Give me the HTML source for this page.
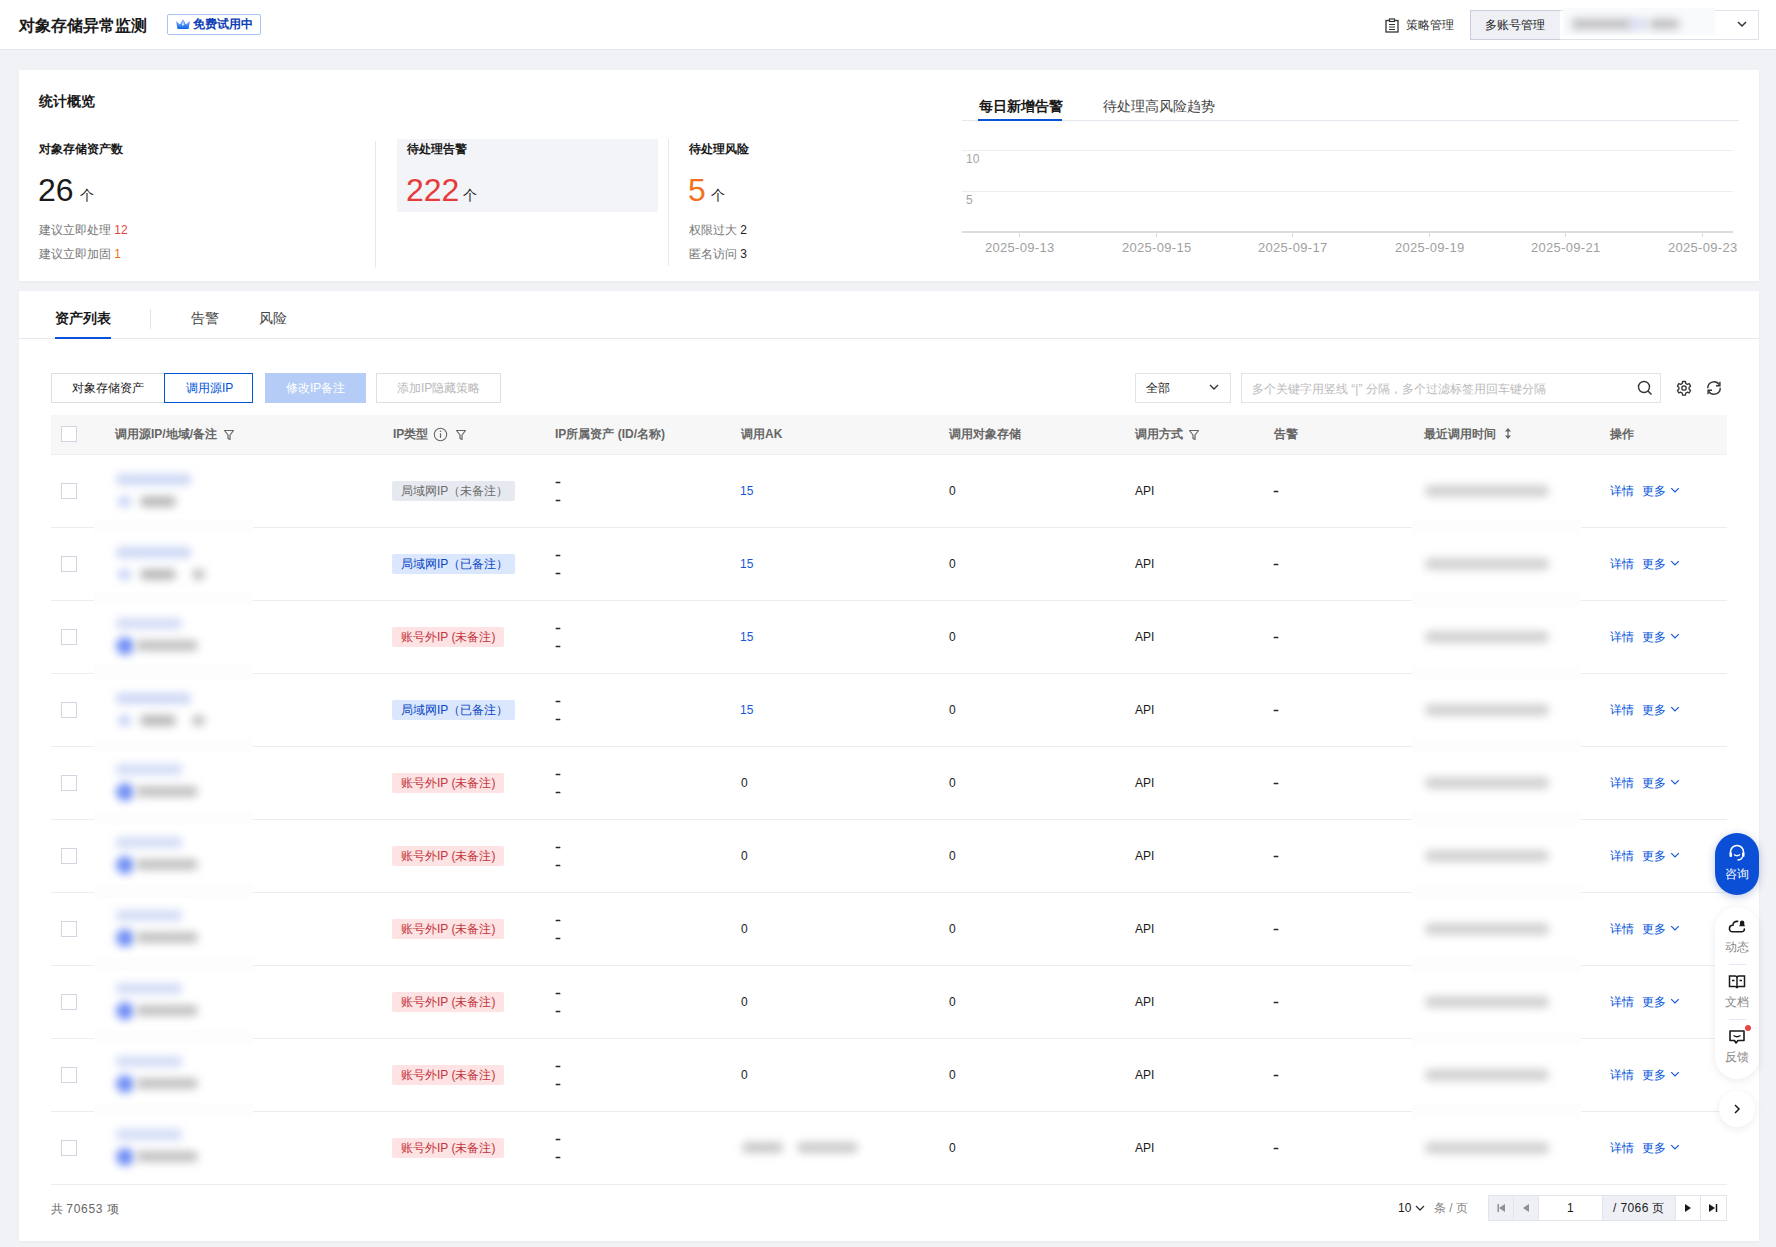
<!DOCTYPE html>
<html><head><meta charset="utf-8">
<style>
*{box-sizing:border-box;margin:0;padding:0}
html,body{width:1776px;height:1247px;overflow:hidden;background:#f0f2f6;font-family:"Liberation Sans",sans-serif;color:#1a1a1a}
.a{position:absolute}
.t{position:absolute;white-space:nowrap;line-height:1}
#hdr{left:0;top:0;width:1776px;height:50px;background:#fff;border-bottom:1px solid #e3e6eb}
.card{background:#fff;box-shadow:0 1px 3px rgba(0,0,0,0.04)}
.blur{position:absolute;filter:blur(3px);border-radius:4px}
</style></head>
<body>
<div id="root" class="a" style="left:0;top:0;width:1776px;height:1247px">

<!-- HEADER -->
<div id="hdr" class="a"></div>
<div class="t" style="left:19px;top:18px;font-size:16px;font-weight:700;color:#1a1a1a">对象存储异常监测</div>
<div class="a" style="left:167px;top:14px;width:94px;height:21px;border:1px solid #a9c3f4;border-radius:2px;background:#fff"></div>
<svg class="a" style="left:175px;top:18px" width="16" height="13" viewBox="0 0 16 13"><defs><linearGradient id="cg" x1="0" y1="0" x2="0" y2="1"><stop offset="0" stop-color="#9cc2ff"/><stop offset="1" stop-color="#0b62e6"/></linearGradient></defs><path d="M1 3 L5 6.5 L8 1 L11 6.5 L15 3 L13.5 11 L2.5 11 Z" fill="url(#cg)"/><path d="M8 3.5 L9.2 6.5 L8 8 L6.8 6.5Z" fill="#d6e6ff"/></svg>
<div class="t" style="left:193px;top:18px;font-size:12px;font-weight:700;color:#0b3db6">免费试用中</div>

<svg class="a" style="left:1385px;top:18px" width="14" height="15" viewBox="0 0 14 15"><rect x="1" y="2.5" width="12" height="11.5" fill="none" stroke="#333" stroke-width="1.3"/><rect x="4.5" y="1" width="5" height="2.5" fill="#fff" stroke="#333" stroke-width="1.2"/><path d="M4 6.5h6M4 9h6M4 11.5h6" stroke="#333" stroke-width="1.1"/></svg>
<div class="t" style="left:1406px;top:19px;font-size:12px;color:#333">策略管理</div>
<div class="a" style="left:1470px;top:10px;width:91px;height:30px;background:#eef0f6;border:1px solid #c9cfda"></div>
<div class="t" style="left:1485px;top:19px;font-size:12px;color:#1a1a1a">多账号管理</div>
<div class="a" style="left:1560px;top:10px;width:199px;height:30px;background:#fff;border:1px solid #dde1e8;border-left:none"></div>
<div class="a" style="left:1563px;top:8px;width:152px;height:27px;background:#f9fafb;filter:blur(0.6px)"></div>
<div class="blur" style="left:1572px;top:19px;width:60px;height:10px;background:#bdbdc0;filter:blur(4px)"></div>
<div class="blur" style="left:1628px;top:19px;width:20px;height:10px;background:#d5dbf0;filter:blur(4px)"></div>
<div class="blur" style="left:1650px;top:19px;width:29px;height:10px;background:#bdbdc0;filter:blur(4px)"></div>
<svg class="a" style="left:1736px;top:19px" width="12" height="10" viewBox="0 0 12 10"><path d="M2 3 L6 7 L10 3" fill="none" stroke="#333" stroke-width="1.5"/></svg>

<!-- CARD 1 -->
<div class="a card" style="left:19px;top:70px;width:1740px;height:211px"></div>
<div class="t" style="left:39px;top:94px;font-size:14px;font-weight:700">统计概览</div>

<div class="t" style="left:39px;top:143px;font-size:12px;font-weight:700">对象存储资产数</div>
<div class="t" style="left:38px;top:174px;font-size:32px;color:#1a1a1a">26</div>
<div class="t" style="left:80px;top:188px;font-size:14px;color:#1a1a1a">个</div>
<div class="t" style="left:39px;top:224px;font-size:12px;color:#777">建议立即处理 <span style="color:#e54545">12</span></div>
<div class="t" style="left:39px;top:248px;font-size:12px;color:#777">建议立即加固 <span style="color:#f06f19">1</span></div>
<div class="a" style="left:375px;top:141px;width:1px;height:127px;background:#e6e9f0"></div>

<div class="a" style="left:397px;top:139px;width:261px;height:73px;background:#f3f4f7"></div>
<div class="t" style="left:407px;top:143px;font-size:12px;font-weight:700">待处理告警</div>
<div class="t" style="left:406px;top:174px;font-size:32px;color:#e63b3b">222</div>
<div class="t" style="left:463px;top:188px;font-size:14px">个</div>
<div class="a" style="left:668px;top:139px;width:1px;height:127px;background:#e6e9f0"></div>

<div class="t" style="left:689px;top:143px;font-size:12px;font-weight:700">待处理风险</div>
<div class="t" style="left:688px;top:174px;font-size:32px;color:#f2711c">5</div>
<div class="t" style="left:711px;top:188px;font-size:14px">个</div>
<div class="t" style="left:689px;top:224px;font-size:12px;color:#777">权限过大 <span style="color:#1a1a1a">2</span></div>
<div class="t" style="left:689px;top:248px;font-size:12px;color:#777">匿名访问 <span style="color:#1a1a1a">3</span></div>

<!-- chart -->
<div class="t" style="left:979px;top:99px;font-size:14px;font-weight:700">每日新增告警</div>
<div class="t" style="left:1103px;top:99px;font-size:14px;color:#444">待处理高风险趋势</div>
<div class="a" style="left:962px;top:120px;width:777px;height:1px;background:#e5e8ef"></div>
<div class="a" style="left:978px;top:119px;width:84px;height:2px;background:#0a52d9"></div>

<div class="a" style="left:962px;top:150px;width:771px;height:1px;background:#eeeeee"></div>
<div class="a" style="left:962px;top:191px;width:771px;height:1px;background:#eeeeee"></div>
<div class="a" style="left:962px;top:231px;width:771px;height:2px;background:#dcdcdc"></div>
<div class="t" style="left:966px;top:153px;font-size:12px;color:#a3a3a3">10</div>
<div class="t" style="left:966px;top:194px;font-size:12px;color:#a3a3a3">5</div>
<div id="ticks"></div>

<!-- CARD 2 -->
<div class="a card" style="left:19px;top:291px;width:1740px;height:950px"></div>
<div class="t" style="left:55px;top:311px;font-size:14px;font-weight:700">资产列表</div>
<div class="t" style="left:191px;top:311px;font-size:14px;color:#444">告警</div>
<div class="t" style="left:259px;top:311px;font-size:14px;color:#444">风险</div>
<div class="a" style="left:150px;top:309px;width:1px;height:20px;background:#e3e6eb"></div>
<div class="a" style="left:19px;top:338px;width:1740px;height:1px;background:#e5e8ef"></div>
<div class="a" style="left:55px;top:337px;width:56px;height:2px;background:#0a52d9"></div>
<div class="a" style="left:1019px;top:232px;width:1px;height:5px;background:#dcdcdc;"></div>
<div class="t" style="left:985px;top:241px;font-size:13px;color:#a0a0a0;font-weight:400;letter-spacing:0.3px">2025-09-13</div>
<div class="a" style="left:1156px;top:232px;width:1px;height:5px;background:#dcdcdc;"></div>
<div class="t" style="left:1122px;top:241px;font-size:13px;color:#a0a0a0;font-weight:400;letter-spacing:0.3px">2025-09-15</div>
<div class="a" style="left:1292px;top:232px;width:1px;height:5px;background:#dcdcdc;"></div>
<div class="t" style="left:1258px;top:241px;font-size:13px;color:#a0a0a0;font-weight:400;letter-spacing:0.3px">2025-09-17</div>
<div class="a" style="left:1429px;top:232px;width:1px;height:5px;background:#dcdcdc;"></div>
<div class="t" style="left:1395px;top:241px;font-size:13px;color:#a0a0a0;font-weight:400;letter-spacing:0.3px">2025-09-19</div>
<div class="a" style="left:1565px;top:232px;width:1px;height:5px;background:#dcdcdc;"></div>
<div class="t" style="left:1531px;top:241px;font-size:13px;color:#a0a0a0;font-weight:400;letter-spacing:0.3px">2025-09-21</div>
<div class="a" style="left:1702px;top:232px;width:1px;height:5px;background:#dcdcdc;"></div>
<div class="t" style="left:1668px;top:241px;font-size:13px;color:#a0a0a0;font-weight:400;letter-spacing:0.3px">2025-09-23</div>
<div class="a" style="left:51px;top:373px;width:113px;height:30px;background:#fff;border:1px solid #dcdfe6;border-right:none"></div>
<div class="t" style="left:72px;top:382px;font-size:12px;color:#1a1a1a;font-weight:400;">对象存储资产</div>
<div class="a" style="left:164px;top:373px;width:89px;height:30px;background:#fff;border:1px solid #0052d9"></div>
<div class="t" style="left:186px;top:382px;font-size:12px;color:#0052d9;font-weight:400;">调用源IP</div>
<div class="a" style="left:265px;top:373px;width:101px;height:30px;background:#b5cdf6;"></div>
<div class="t" style="left:286px;top:382px;font-size:12px;color:#fff;font-weight:400;">修改IP备注</div>
<div class="a" style="left:376px;top:373px;width:125px;height:30px;background:#fff;border:1px solid #dcdfe6"></div>
<div class="t" style="left:397px;top:382px;font-size:12px;color:#b8b8b8;font-weight:400;">添加IP隐藏策略</div>
<div class="a" style="left:1135px;top:373px;width:96px;height:30px;background:#fff;border:1px solid #e0e3ea"></div>
<div class="t" style="left:1146px;top:382px;font-size:12px;color:#1a1a1a;font-weight:400;">全部</div>
<svg class="a" style="left:1208px;top:382px" width="12" height="10" viewBox="0 0 12 10"><path d="M2 3 L6 7 L10 3" fill="none" stroke="#333" stroke-width="1.25"/></svg>
<div class="a" style="left:1241px;top:373px;width:420px;height:30px;background:#fff;border:1px solid #e0e3ea"></div>
<div class="t" style="left:1252px;top:383px;font-size:12px;color:#bbb;font-weight:400;">多个关键字用竖线 “|” 分隔，多个过滤标签用回车键分隔</div>
<svg class="a" style="left:1637px;top:380px" width="16" height="16" viewBox="0 0 16 16"><circle cx="7" cy="7" r="5.5" fill="none" stroke="#333" stroke-width="1.4"/><path d="M11 11 L14.5 14.5" stroke="#333" stroke-width="1.5"/></svg>
<svg class="a" style="left:1676px;top:380px" width="16" height="16" viewBox="0 0 16 16"><path d="M6.6 1.5h2.8l.4 2 1.5.9 1.9-.7 1.4 2.4-1.5 1.3v1.8l1.5 1.3-1.4 2.4-1.9-.7-1.5.9-.4 2H6.6l-.4-2-1.5-.9-1.9.7L1.4 10.5l1.5-1.3V7.4L1.4 6.1 2.8 3.7l1.9.7 1.5-.9z" fill="none" stroke="#333" stroke-width="1.3" stroke-linejoin="round"/><circle cx="8" cy="8" r="2.2" fill="none" stroke="#333" stroke-width="1.3"/></svg>
<svg class="a" style="left:1706px;top:380px" width="16" height="16" viewBox="0 0 16 16"><path d="M1.8 8.2A6.2 6.2 0 0 1 13.2 4.6" fill="none" stroke="#333" stroke-width="1.4"/><path d="M14.2 7.8A6.2 6.2 0 0 1 2.8 11.4" fill="none" stroke="#333" stroke-width="1.4"/><path d="M13.9 1.8v3.9H10" fill="none" stroke="#333" stroke-width="1.4"/><path d="M2.1 14.2v-3.9H6" fill="none" stroke="#333" stroke-width="1.4"/></svg>
<div class="a" style="left:51px;top:415px;width:1676px;height:39px;background:#f7f7f7;"></div>
<div class="a" style="left:51px;top:454px;width:1676px;height:1px;background:#eeeef3;"></div>
<div class="a" style="left:61px;top:426px;width:16px;height:16px;background:#fff;border:1px solid #d0d5df"></div>
<div class="t" style="left:115px;top:428px;font-size:12px;color:#666;font-weight:700;">调用源IP/地域/备注</div>
<svg class="a" style="left:223px;top:429px" width="12" height="12" viewBox="0 0 12 12"><path d="M1.5 1.5h9L7 6v4.5L5 9.5V6z" fill="none" stroke="#666" stroke-width="1.2" stroke-linejoin="round"/></svg>
<div class="t" style="left:393px;top:428px;font-size:12px;color:#666;font-weight:700;">IP类型</div>
<svg class="a" style="left:433px;top:427px" width="15" height="15" viewBox="0 0 15 15"><circle cx="7.5" cy="7.5" r="6.2" fill="none" stroke="#666" stroke-width="1.1"/><path d="M7.5 6.3v4.6" stroke="#666" stroke-width="1.2"/><circle cx="7.5" cy="4.3" r="0.8" fill="#666"/></svg>
<svg class="a" style="left:455px;top:429px" width="12" height="12" viewBox="0 0 12 12"><path d="M1.5 1.5h9L7 6v4.5L5 9.5V6z" fill="none" stroke="#666" stroke-width="1.2" stroke-linejoin="round"/></svg>
<div class="t" style="left:555px;top:428px;font-size:12px;color:#666;font-weight:700;">IP所属资产 (ID/名称)</div>
<div class="t" style="left:741px;top:428px;font-size:12px;color:#666;font-weight:700;">调用AK</div>
<div class="t" style="left:949px;top:428px;font-size:12px;color:#666;font-weight:700;">调用对象存储</div>
<div class="t" style="left:1135px;top:428px;font-size:12px;color:#666;font-weight:700;">调用方式</div>
<svg class="a" style="left:1188px;top:429px" width="12" height="12" viewBox="0 0 12 12"><path d="M1.5 1.5h9L7 6v4.5L5 9.5V6z" fill="none" stroke="#666" stroke-width="1.2" stroke-linejoin="round"/></svg>
<div class="t" style="left:1274px;top:428px;font-size:12px;color:#666;font-weight:700;">告警</div>
<div class="t" style="left:1424px;top:428px;font-size:12px;color:#666;font-weight:700;">最近调用时间</div>
<svg class="a" style="left:1503px;top:427px" width="10" height="13" viewBox="0 0 10 13"><path d="M5 3v7" stroke="#666" stroke-width="1.2"/><path d="M2 4.4L5 1 8 4.4z M2 8.6L5 12 8 8.6z" fill="#666"/></svg>
<div class="t" style="left:1610px;top:428px;font-size:12px;color:#666;font-weight:700;">操作</div>
<div class="a" style="left:51px;top:527px;width:1676px;height:1px;background:#ebedf1;"></div>
<div class="a" style="left:61px;top:483px;width:16px;height:16px;background:#fff;border:1px solid #d0d5df"></div>
<div class="a" style="left:94px;top:519px;width:159px;height:14px;background:#fdfdfd;"></div>
<div class="a" style="left:116px;top:474px;width:75px;height:11px;background:#ccd7f5;filter:blur(4px);border-radius:4px;"></div>
<div class="a" style="left:118px;top:496px;width:13px;height:11px;background:#c5d1f5;filter:blur(4px);border-radius:6px;"></div>
<div class="a" style="left:140px;top:496px;width:36px;height:11px;background:#b9b9b9;filter:blur(4px);border-radius:5px;"></div>
<div class="a" style="left:392px;top:481px;width:123px;height:20px;background:#e6e9ef;border-radius:2px"></div>
<div class="t" style="left:401px;top:485px;font-size:12px;color:#6b6b6b;font-weight:400;">局域网IP（未备注）</div>
<svg class="a" style="left:554.5px;top:480px" width="7" height="4" viewBox="0 0 7 4"><rect x="0.6" y="1.85" width="4.8" height="1.3" rx="0.5" fill="#2a2a2a"/></svg>
<svg class="a" style="left:554.5px;top:498px" width="7" height="4" viewBox="0 0 7 4"><rect x="0.6" y="1.85" width="4.8" height="1.3" rx="0.5" fill="#2a2a2a"/></svg>
<div class="t" style="left:740px;top:485px;font-size:12px;color:#1a56d8;font-weight:400;">15</div>
<div class="t" style="left:949px;top:485px;font-size:12px;color:#1a1a1a;font-weight:400;">0</div>
<div class="t" style="left:1135px;top:485px;font-size:12px;color:#1a1a1a;font-weight:400;">API</div>
<svg class="a" style="left:1273.0px;top:489px" width="7" height="4" viewBox="0 0 7 4"><rect x="0.6" y="1.85" width="4.8" height="1.3" rx="0.5" fill="#2a2a2a"/></svg>
<div class="a" style="left:1412px;top:520px;width:169px;height:14px;background:#fdfdfd;"></div>
<div class="a" style="left:1425px;top:485px;width:124px;height:12px;background:#d2d2d2;filter:blur(4px);border-radius:5px;"></div>
<div class="t" style="left:1610px;top:485px;font-size:12px;color:#0052d9;font-weight:400;">详情</div>
<div class="t" style="left:1642px;top:485px;font-size:12px;color:#0052d9;font-weight:400;">更多</div>
<svg class="a" style="left:1670px;top:486px" width="10" height="9" viewBox="0 0 10 9"><path d="M1.2 2.2L5 6 8.8 2.2" fill="none" stroke="#1a56d8" stroke-width="1.2"/></svg>
<div class="a" style="left:51px;top:600px;width:1676px;height:1px;background:#ebedf1;"></div>
<div class="a" style="left:61px;top:556px;width:16px;height:16px;background:#fff;border:1px solid #d0d5df"></div>
<div class="a" style="left:94px;top:592px;width:159px;height:14px;background:#fdfdfd;"></div>
<div class="a" style="left:116px;top:547px;width:75px;height:11px;background:#ccd7f5;filter:blur(4px);border-radius:4px;"></div>
<div class="a" style="left:118px;top:569px;width:13px;height:11px;background:#c5d1f5;filter:blur(4px);border-radius:6px;"></div>
<div class="a" style="left:140px;top:569px;width:36px;height:11px;background:#b9b9b9;filter:blur(4px);border-radius:5px;"></div>
<div class="a" style="left:192px;top:569px;width:13px;height:11px;background:#c0c0c0;filter:blur(4px);border-radius:6px;"></div>
<div class="a" style="left:392px;top:554px;width:123px;height:20px;background:#dbe7fd;border-radius:2px"></div>
<div class="t" style="left:401px;top:558px;font-size:12px;color:#0a46c4;font-weight:400;">局域网IP（已备注）</div>
<svg class="a" style="left:554.5px;top:553px" width="7" height="4" viewBox="0 0 7 4"><rect x="0.6" y="1.85" width="4.8" height="1.3" rx="0.5" fill="#2a2a2a"/></svg>
<svg class="a" style="left:554.5px;top:571px" width="7" height="4" viewBox="0 0 7 4"><rect x="0.6" y="1.85" width="4.8" height="1.3" rx="0.5" fill="#2a2a2a"/></svg>
<div class="t" style="left:740px;top:558px;font-size:12px;color:#1a56d8;font-weight:400;">15</div>
<div class="t" style="left:949px;top:558px;font-size:12px;color:#1a1a1a;font-weight:400;">0</div>
<div class="t" style="left:1135px;top:558px;font-size:12px;color:#1a1a1a;font-weight:400;">API</div>
<svg class="a" style="left:1273.0px;top:562px" width="7" height="4" viewBox="0 0 7 4"><rect x="0.6" y="1.85" width="4.8" height="1.3" rx="0.5" fill="#2a2a2a"/></svg>
<div class="a" style="left:1412px;top:593px;width:169px;height:14px;background:#fdfdfd;"></div>
<div class="a" style="left:1425px;top:558px;width:124px;height:12px;background:#d2d2d2;filter:blur(4px);border-radius:5px;"></div>
<div class="t" style="left:1610px;top:558px;font-size:12px;color:#0052d9;font-weight:400;">详情</div>
<div class="t" style="left:1642px;top:558px;font-size:12px;color:#0052d9;font-weight:400;">更多</div>
<svg class="a" style="left:1670px;top:559px" width="10" height="9" viewBox="0 0 10 9"><path d="M1.2 2.2L5 6 8.8 2.2" fill="none" stroke="#1a56d8" stroke-width="1.2"/></svg>
<div class="a" style="left:51px;top:673px;width:1676px;height:1px;background:#ebedf1;"></div>
<div class="a" style="left:61px;top:629px;width:16px;height:16px;background:#fff;border:1px solid #d0d5df"></div>
<div class="a" style="left:94px;top:665px;width:159px;height:14px;background:#fdfdfd;"></div>
<div class="a" style="left:116px;top:618px;width:66px;height:11px;background:#d3dcf6;filter:blur(4px);border-radius:4px;"></div>
<div class="a" style="left:116px;top:637px;width:18px;height:18px;background:#6f8ef5;filter:blur(4px);border-radius:9px;"></div>
<div class="a" style="left:136px;top:640px;width:62px;height:11px;background:#c2c2c2;filter:blur(4px);border-radius:5px;"></div>
<div class="a" style="left:392px;top:627px;width:112px;height:20px;background:#fde3e3;border-radius:2px"></div>
<div class="t" style="left:401px;top:631px;font-size:12px;color:#c4343c;font-weight:400;">账号外IP (未备注)</div>
<svg class="a" style="left:554.5px;top:626px" width="7" height="4" viewBox="0 0 7 4"><rect x="0.6" y="1.85" width="4.8" height="1.3" rx="0.5" fill="#2a2a2a"/></svg>
<svg class="a" style="left:554.5px;top:644px" width="7" height="4" viewBox="0 0 7 4"><rect x="0.6" y="1.85" width="4.8" height="1.3" rx="0.5" fill="#2a2a2a"/></svg>
<div class="t" style="left:740px;top:631px;font-size:12px;color:#1a56d8;font-weight:400;">15</div>
<div class="t" style="left:949px;top:631px;font-size:12px;color:#1a1a1a;font-weight:400;">0</div>
<div class="t" style="left:1135px;top:631px;font-size:12px;color:#1a1a1a;font-weight:400;">API</div>
<svg class="a" style="left:1273.0px;top:635px" width="7" height="4" viewBox="0 0 7 4"><rect x="0.6" y="1.85" width="4.8" height="1.3" rx="0.5" fill="#2a2a2a"/></svg>
<div class="a" style="left:1412px;top:666px;width:169px;height:14px;background:#fdfdfd;"></div>
<div class="a" style="left:1425px;top:631px;width:124px;height:12px;background:#d2d2d2;filter:blur(4px);border-radius:5px;"></div>
<div class="t" style="left:1610px;top:631px;font-size:12px;color:#0052d9;font-weight:400;">详情</div>
<div class="t" style="left:1642px;top:631px;font-size:12px;color:#0052d9;font-weight:400;">更多</div>
<svg class="a" style="left:1670px;top:632px" width="10" height="9" viewBox="0 0 10 9"><path d="M1.2 2.2L5 6 8.8 2.2" fill="none" stroke="#1a56d8" stroke-width="1.2"/></svg>
<div class="a" style="left:51px;top:746px;width:1676px;height:1px;background:#ebedf1;"></div>
<div class="a" style="left:61px;top:702px;width:16px;height:16px;background:#fff;border:1px solid #d0d5df"></div>
<div class="a" style="left:94px;top:738px;width:159px;height:14px;background:#fdfdfd;"></div>
<div class="a" style="left:116px;top:693px;width:75px;height:11px;background:#ccd7f5;filter:blur(4px);border-radius:4px;"></div>
<div class="a" style="left:118px;top:715px;width:13px;height:11px;background:#c5d1f5;filter:blur(4px);border-radius:6px;"></div>
<div class="a" style="left:140px;top:715px;width:36px;height:11px;background:#b9b9b9;filter:blur(4px);border-radius:5px;"></div>
<div class="a" style="left:192px;top:715px;width:13px;height:11px;background:#c0c0c0;filter:blur(4px);border-radius:6px;"></div>
<div class="a" style="left:392px;top:700px;width:123px;height:20px;background:#dbe7fd;border-radius:2px"></div>
<div class="t" style="left:401px;top:704px;font-size:12px;color:#0a46c4;font-weight:400;">局域网IP（已备注）</div>
<svg class="a" style="left:554.5px;top:699px" width="7" height="4" viewBox="0 0 7 4"><rect x="0.6" y="1.85" width="4.8" height="1.3" rx="0.5" fill="#2a2a2a"/></svg>
<svg class="a" style="left:554.5px;top:717px" width="7" height="4" viewBox="0 0 7 4"><rect x="0.6" y="1.85" width="4.8" height="1.3" rx="0.5" fill="#2a2a2a"/></svg>
<div class="t" style="left:740px;top:704px;font-size:12px;color:#1a56d8;font-weight:400;">15</div>
<div class="t" style="left:949px;top:704px;font-size:12px;color:#1a1a1a;font-weight:400;">0</div>
<div class="t" style="left:1135px;top:704px;font-size:12px;color:#1a1a1a;font-weight:400;">API</div>
<svg class="a" style="left:1273.0px;top:708px" width="7" height="4" viewBox="0 0 7 4"><rect x="0.6" y="1.85" width="4.8" height="1.3" rx="0.5" fill="#2a2a2a"/></svg>
<div class="a" style="left:1412px;top:739px;width:169px;height:14px;background:#fdfdfd;"></div>
<div class="a" style="left:1425px;top:704px;width:124px;height:12px;background:#d2d2d2;filter:blur(4px);border-radius:5px;"></div>
<div class="t" style="left:1610px;top:704px;font-size:12px;color:#0052d9;font-weight:400;">详情</div>
<div class="t" style="left:1642px;top:704px;font-size:12px;color:#0052d9;font-weight:400;">更多</div>
<svg class="a" style="left:1670px;top:705px" width="10" height="9" viewBox="0 0 10 9"><path d="M1.2 2.2L5 6 8.8 2.2" fill="none" stroke="#1a56d8" stroke-width="1.2"/></svg>
<div class="a" style="left:51px;top:819px;width:1676px;height:1px;background:#ebedf1;"></div>
<div class="a" style="left:61px;top:775px;width:16px;height:16px;background:#fff;border:1px solid #d0d5df"></div>
<div class="a" style="left:94px;top:811px;width:159px;height:14px;background:#fdfdfd;"></div>
<div class="a" style="left:116px;top:764px;width:66px;height:11px;background:#d3dcf6;filter:blur(4px);border-radius:4px;"></div>
<div class="a" style="left:116px;top:783px;width:18px;height:18px;background:#6f8ef5;filter:blur(4px);border-radius:9px;"></div>
<div class="a" style="left:136px;top:786px;width:62px;height:11px;background:#c2c2c2;filter:blur(4px);border-radius:5px;"></div>
<div class="a" style="left:392px;top:773px;width:112px;height:20px;background:#fde3e3;border-radius:2px"></div>
<div class="t" style="left:401px;top:777px;font-size:12px;color:#c4343c;font-weight:400;">账号外IP (未备注)</div>
<svg class="a" style="left:554.5px;top:772px" width="7" height="4" viewBox="0 0 7 4"><rect x="0.6" y="1.85" width="4.8" height="1.3" rx="0.5" fill="#2a2a2a"/></svg>
<svg class="a" style="left:554.5px;top:790px" width="7" height="4" viewBox="0 0 7 4"><rect x="0.6" y="1.85" width="4.8" height="1.3" rx="0.5" fill="#2a2a2a"/></svg>
<div class="t" style="left:741px;top:777px;font-size:12px;color:#1a1a1a;font-weight:400;">0</div>
<div class="t" style="left:949px;top:777px;font-size:12px;color:#1a1a1a;font-weight:400;">0</div>
<div class="t" style="left:1135px;top:777px;font-size:12px;color:#1a1a1a;font-weight:400;">API</div>
<svg class="a" style="left:1273.0px;top:781px" width="7" height="4" viewBox="0 0 7 4"><rect x="0.6" y="1.85" width="4.8" height="1.3" rx="0.5" fill="#2a2a2a"/></svg>
<div class="a" style="left:1412px;top:812px;width:169px;height:14px;background:#fdfdfd;"></div>
<div class="a" style="left:1425px;top:777px;width:124px;height:12px;background:#d2d2d2;filter:blur(4px);border-radius:5px;"></div>
<div class="t" style="left:1610px;top:777px;font-size:12px;color:#0052d9;font-weight:400;">详情</div>
<div class="t" style="left:1642px;top:777px;font-size:12px;color:#0052d9;font-weight:400;">更多</div>
<svg class="a" style="left:1670px;top:778px" width="10" height="9" viewBox="0 0 10 9"><path d="M1.2 2.2L5 6 8.8 2.2" fill="none" stroke="#1a56d8" stroke-width="1.2"/></svg>
<div class="a" style="left:51px;top:892px;width:1676px;height:1px;background:#ebedf1;"></div>
<div class="a" style="left:61px;top:848px;width:16px;height:16px;background:#fff;border:1px solid #d0d5df"></div>
<div class="a" style="left:94px;top:884px;width:159px;height:14px;background:#fdfdfd;"></div>
<div class="a" style="left:116px;top:837px;width:66px;height:11px;background:#d3dcf6;filter:blur(4px);border-radius:4px;"></div>
<div class="a" style="left:116px;top:856px;width:18px;height:18px;background:#6f8ef5;filter:blur(4px);border-radius:9px;"></div>
<div class="a" style="left:136px;top:859px;width:62px;height:11px;background:#c2c2c2;filter:blur(4px);border-radius:5px;"></div>
<div class="a" style="left:392px;top:846px;width:112px;height:20px;background:#fde3e3;border-radius:2px"></div>
<div class="t" style="left:401px;top:850px;font-size:12px;color:#c4343c;font-weight:400;">账号外IP (未备注)</div>
<svg class="a" style="left:554.5px;top:845px" width="7" height="4" viewBox="0 0 7 4"><rect x="0.6" y="1.85" width="4.8" height="1.3" rx="0.5" fill="#2a2a2a"/></svg>
<svg class="a" style="left:554.5px;top:863px" width="7" height="4" viewBox="0 0 7 4"><rect x="0.6" y="1.85" width="4.8" height="1.3" rx="0.5" fill="#2a2a2a"/></svg>
<div class="t" style="left:741px;top:850px;font-size:12px;color:#1a1a1a;font-weight:400;">0</div>
<div class="t" style="left:949px;top:850px;font-size:12px;color:#1a1a1a;font-weight:400;">0</div>
<div class="t" style="left:1135px;top:850px;font-size:12px;color:#1a1a1a;font-weight:400;">API</div>
<svg class="a" style="left:1273.0px;top:854px" width="7" height="4" viewBox="0 0 7 4"><rect x="0.6" y="1.85" width="4.8" height="1.3" rx="0.5" fill="#2a2a2a"/></svg>
<div class="a" style="left:1412px;top:885px;width:169px;height:14px;background:#fdfdfd;"></div>
<div class="a" style="left:1425px;top:850px;width:124px;height:12px;background:#d2d2d2;filter:blur(4px);border-radius:5px;"></div>
<div class="t" style="left:1610px;top:850px;font-size:12px;color:#0052d9;font-weight:400;">详情</div>
<div class="t" style="left:1642px;top:850px;font-size:12px;color:#0052d9;font-weight:400;">更多</div>
<svg class="a" style="left:1670px;top:851px" width="10" height="9" viewBox="0 0 10 9"><path d="M1.2 2.2L5 6 8.8 2.2" fill="none" stroke="#1a56d8" stroke-width="1.2"/></svg>
<div class="a" style="left:51px;top:965px;width:1676px;height:1px;background:#ebedf1;"></div>
<div class="a" style="left:61px;top:921px;width:16px;height:16px;background:#fff;border:1px solid #d0d5df"></div>
<div class="a" style="left:94px;top:957px;width:159px;height:14px;background:#fdfdfd;"></div>
<div class="a" style="left:116px;top:910px;width:66px;height:11px;background:#d3dcf6;filter:blur(4px);border-radius:4px;"></div>
<div class="a" style="left:116px;top:929px;width:18px;height:18px;background:#6f8ef5;filter:blur(4px);border-radius:9px;"></div>
<div class="a" style="left:136px;top:932px;width:62px;height:11px;background:#c2c2c2;filter:blur(4px);border-radius:5px;"></div>
<div class="a" style="left:392px;top:919px;width:112px;height:20px;background:#fde3e3;border-radius:2px"></div>
<div class="t" style="left:401px;top:923px;font-size:12px;color:#c4343c;font-weight:400;">账号外IP (未备注)</div>
<svg class="a" style="left:554.5px;top:918px" width="7" height="4" viewBox="0 0 7 4"><rect x="0.6" y="1.85" width="4.8" height="1.3" rx="0.5" fill="#2a2a2a"/></svg>
<svg class="a" style="left:554.5px;top:936px" width="7" height="4" viewBox="0 0 7 4"><rect x="0.6" y="1.85" width="4.8" height="1.3" rx="0.5" fill="#2a2a2a"/></svg>
<div class="t" style="left:741px;top:923px;font-size:12px;color:#1a1a1a;font-weight:400;">0</div>
<div class="t" style="left:949px;top:923px;font-size:12px;color:#1a1a1a;font-weight:400;">0</div>
<div class="t" style="left:1135px;top:923px;font-size:12px;color:#1a1a1a;font-weight:400;">API</div>
<svg class="a" style="left:1273.0px;top:927px" width="7" height="4" viewBox="0 0 7 4"><rect x="0.6" y="1.85" width="4.8" height="1.3" rx="0.5" fill="#2a2a2a"/></svg>
<div class="a" style="left:1412px;top:958px;width:169px;height:14px;background:#fdfdfd;"></div>
<div class="a" style="left:1425px;top:923px;width:124px;height:12px;background:#d2d2d2;filter:blur(4px);border-radius:5px;"></div>
<div class="t" style="left:1610px;top:923px;font-size:12px;color:#0052d9;font-weight:400;">详情</div>
<div class="t" style="left:1642px;top:923px;font-size:12px;color:#0052d9;font-weight:400;">更多</div>
<svg class="a" style="left:1670px;top:924px" width="10" height="9" viewBox="0 0 10 9"><path d="M1.2 2.2L5 6 8.8 2.2" fill="none" stroke="#1a56d8" stroke-width="1.2"/></svg>
<div class="a" style="left:51px;top:1038px;width:1676px;height:1px;background:#ebedf1;"></div>
<div class="a" style="left:61px;top:994px;width:16px;height:16px;background:#fff;border:1px solid #d0d5df"></div>
<div class="a" style="left:94px;top:1030px;width:159px;height:14px;background:#fdfdfd;"></div>
<div class="a" style="left:116px;top:983px;width:66px;height:11px;background:#d3dcf6;filter:blur(4px);border-radius:4px;"></div>
<div class="a" style="left:116px;top:1002px;width:18px;height:18px;background:#6f8ef5;filter:blur(4px);border-radius:9px;"></div>
<div class="a" style="left:136px;top:1005px;width:62px;height:11px;background:#c2c2c2;filter:blur(4px);border-radius:5px;"></div>
<div class="a" style="left:392px;top:992px;width:112px;height:20px;background:#fde3e3;border-radius:2px"></div>
<div class="t" style="left:401px;top:996px;font-size:12px;color:#c4343c;font-weight:400;">账号外IP (未备注)</div>
<svg class="a" style="left:554.5px;top:991px" width="7" height="4" viewBox="0 0 7 4"><rect x="0.6" y="1.85" width="4.8" height="1.3" rx="0.5" fill="#2a2a2a"/></svg>
<svg class="a" style="left:554.5px;top:1009px" width="7" height="4" viewBox="0 0 7 4"><rect x="0.6" y="1.85" width="4.8" height="1.3" rx="0.5" fill="#2a2a2a"/></svg>
<div class="t" style="left:741px;top:996px;font-size:12px;color:#1a1a1a;font-weight:400;">0</div>
<div class="t" style="left:949px;top:996px;font-size:12px;color:#1a1a1a;font-weight:400;">0</div>
<div class="t" style="left:1135px;top:996px;font-size:12px;color:#1a1a1a;font-weight:400;">API</div>
<svg class="a" style="left:1273.0px;top:1000px" width="7" height="4" viewBox="0 0 7 4"><rect x="0.6" y="1.85" width="4.8" height="1.3" rx="0.5" fill="#2a2a2a"/></svg>
<div class="a" style="left:1412px;top:1031px;width:169px;height:14px;background:#fdfdfd;"></div>
<div class="a" style="left:1425px;top:996px;width:124px;height:12px;background:#d2d2d2;filter:blur(4px);border-radius:5px;"></div>
<div class="t" style="left:1610px;top:996px;font-size:12px;color:#0052d9;font-weight:400;">详情</div>
<div class="t" style="left:1642px;top:996px;font-size:12px;color:#0052d9;font-weight:400;">更多</div>
<svg class="a" style="left:1670px;top:997px" width="10" height="9" viewBox="0 0 10 9"><path d="M1.2 2.2L5 6 8.8 2.2" fill="none" stroke="#1a56d8" stroke-width="1.2"/></svg>
<div class="a" style="left:51px;top:1111px;width:1676px;height:1px;background:#ebedf1;"></div>
<div class="a" style="left:61px;top:1067px;width:16px;height:16px;background:#fff;border:1px solid #d0d5df"></div>
<div class="a" style="left:94px;top:1103px;width:159px;height:14px;background:#fdfdfd;"></div>
<div class="a" style="left:116px;top:1056px;width:66px;height:11px;background:#d3dcf6;filter:blur(4px);border-radius:4px;"></div>
<div class="a" style="left:116px;top:1075px;width:18px;height:18px;background:#6f8ef5;filter:blur(4px);border-radius:9px;"></div>
<div class="a" style="left:136px;top:1078px;width:62px;height:11px;background:#c2c2c2;filter:blur(4px);border-radius:5px;"></div>
<div class="a" style="left:392px;top:1065px;width:112px;height:20px;background:#fde3e3;border-radius:2px"></div>
<div class="t" style="left:401px;top:1069px;font-size:12px;color:#c4343c;font-weight:400;">账号外IP (未备注)</div>
<svg class="a" style="left:554.5px;top:1064px" width="7" height="4" viewBox="0 0 7 4"><rect x="0.6" y="1.85" width="4.8" height="1.3" rx="0.5" fill="#2a2a2a"/></svg>
<svg class="a" style="left:554.5px;top:1082px" width="7" height="4" viewBox="0 0 7 4"><rect x="0.6" y="1.85" width="4.8" height="1.3" rx="0.5" fill="#2a2a2a"/></svg>
<div class="t" style="left:741px;top:1069px;font-size:12px;color:#1a1a1a;font-weight:400;">0</div>
<div class="t" style="left:949px;top:1069px;font-size:12px;color:#1a1a1a;font-weight:400;">0</div>
<div class="t" style="left:1135px;top:1069px;font-size:12px;color:#1a1a1a;font-weight:400;">API</div>
<svg class="a" style="left:1273.0px;top:1073px" width="7" height="4" viewBox="0 0 7 4"><rect x="0.6" y="1.85" width="4.8" height="1.3" rx="0.5" fill="#2a2a2a"/></svg>
<div class="a" style="left:1412px;top:1104px;width:169px;height:14px;background:#fdfdfd;"></div>
<div class="a" style="left:1425px;top:1069px;width:124px;height:12px;background:#d2d2d2;filter:blur(4px);border-radius:5px;"></div>
<div class="t" style="left:1610px;top:1069px;font-size:12px;color:#0052d9;font-weight:400;">详情</div>
<div class="t" style="left:1642px;top:1069px;font-size:12px;color:#0052d9;font-weight:400;">更多</div>
<svg class="a" style="left:1670px;top:1070px" width="10" height="9" viewBox="0 0 10 9"><path d="M1.2 2.2L5 6 8.8 2.2" fill="none" stroke="#1a56d8" stroke-width="1.2"/></svg>
<div class="a" style="left:51px;top:1184px;width:1676px;height:1px;background:#ebedf1;"></div>
<div class="a" style="left:61px;top:1140px;width:16px;height:16px;background:#fff;border:1px solid #d0d5df"></div>
<div class="a" style="left:116px;top:1129px;width:66px;height:11px;background:#d3dcf6;filter:blur(4px);border-radius:4px;"></div>
<div class="a" style="left:116px;top:1148px;width:18px;height:18px;background:#6f8ef5;filter:blur(4px);border-radius:9px;"></div>
<div class="a" style="left:136px;top:1151px;width:62px;height:11px;background:#c2c2c2;filter:blur(4px);border-radius:5px;"></div>
<div class="a" style="left:392px;top:1138px;width:112px;height:20px;background:#fde3e3;border-radius:2px"></div>
<div class="t" style="left:401px;top:1142px;font-size:12px;color:#c4343c;font-weight:400;">账号外IP (未备注)</div>
<svg class="a" style="left:554.5px;top:1137px" width="7" height="4" viewBox="0 0 7 4"><rect x="0.6" y="1.85" width="4.8" height="1.3" rx="0.5" fill="#2a2a2a"/></svg>
<svg class="a" style="left:554.5px;top:1155px" width="7" height="4" viewBox="0 0 7 4"><rect x="0.6" y="1.85" width="4.8" height="1.3" rx="0.5" fill="#2a2a2a"/></svg>
<div class="a" style="left:742px;top:1142px;width:41px;height:11px;background:#c9c9c9;filter:blur(4px);border-radius:5px;"></div>
<div class="a" style="left:797px;top:1142px;width:61px;height:11px;background:#cbcbcb;filter:blur(4px);border-radius:5px;"></div>
<div class="t" style="left:949px;top:1142px;font-size:12px;color:#1a1a1a;font-weight:400;">0</div>
<div class="t" style="left:1135px;top:1142px;font-size:12px;color:#1a1a1a;font-weight:400;">API</div>
<svg class="a" style="left:1273.0px;top:1146px" width="7" height="4" viewBox="0 0 7 4"><rect x="0.6" y="1.85" width="4.8" height="1.3" rx="0.5" fill="#2a2a2a"/></svg>
<div class="a" style="left:1425px;top:1142px;width:124px;height:12px;background:#d2d2d2;filter:blur(4px);border-radius:5px;"></div>
<div class="t" style="left:1610px;top:1142px;font-size:12px;color:#0052d9;font-weight:400;">详情</div>
<div class="t" style="left:1642px;top:1142px;font-size:12px;color:#0052d9;font-weight:400;">更多</div>
<svg class="a" style="left:1670px;top:1143px" width="10" height="9" viewBox="0 0 10 9"><path d="M1.2 2.2L5 6 8.8 2.2" fill="none" stroke="#1a56d8" stroke-width="1.2"/></svg>
<div class="t" style="left:51px;top:1203px;font-size:12px;color:#666;font-weight:400;">共 <span style="letter-spacing:0.7px">70653</span> 项</div>
<div class="t" style="left:1398px;top:1202px;font-size:12px;color:#1a1a1a;font-weight:400;">10</div>
<svg class="a" style="left:1414px;top:1203px" width="12" height="10" viewBox="0 0 12 10"><path d="M2 3 L6 7 L10 3" fill="none" stroke="#333" stroke-width="1.3"/></svg>
<div class="t" style="left:1434px;top:1202px;font-size:12px;color:#888;font-weight:400;">条 / 页</div>
<div class="a" style="left:1488px;top:1195px;width:239px;height:26px;background:#fff;border:1px solid #e0e4eb"></div>
<div class="a" style="left:1489px;top:1196px;width:49px;height:24px;background:#eef0f5;"></div>
<div class="a" style="left:1513px;top:1196px;width:1px;height:24px;background:#e0e4eb;"></div>
<div class="a" style="left:1538px;top:1196px;width:1px;height:24px;background:#e0e4eb;"></div>
<div class="a" style="left:1602px;top:1196px;width:73px;height:24px;background:#eef0f5;"></div>
<div class="a" style="left:1602px;top:1196px;width:1px;height:24px;background:#e0e4eb;"></div>
<div class="a" style="left:1675px;top:1196px;width:1px;height:24px;background:#e0e4eb;"></div>
<div class="a" style="left:1700px;top:1196px;width:1px;height:24px;background:#e0e4eb;"></div>
<svg class="a" style="left:1495px;top:1202px" width="12" height="12" viewBox="0 0 12 12"><path d="M3.2 2v8" stroke="#8e9095" stroke-width="1.5"/><path d="M10 2v8L4 6z" fill="#8e9095"/></svg>
<svg class="a" style="left:1520px;top:1202px" width="12" height="12" viewBox="0 0 12 12"><path d="M9 2v8L3 6z" fill="#8e9095"/></svg>
<div class="t" style="left:1567px;top:1202px;font-size:12px;color:#1a1a1a;font-weight:400;">1</div>
<div class="t" style="left:1613px;top:1202px;font-size:12px;color:#1a1a1a;font-weight:400;letter-spacing:0.4px">/ 7066 页</div>
<svg class="a" style="left:1682px;top:1202px" width="12" height="12" viewBox="0 0 12 12"><path d="M3 2v8l6-4z" fill="#1a1a1a"/></svg>
<svg class="a" style="left:1707px;top:1202px" width="12" height="12" viewBox="0 0 12 12"><path d="M2 2v8l6-4z" fill="#1a1a1a"/><path d="M9.5 2v8" stroke="#1a1a1a" stroke-width="1.5"/></svg>
<div class="a" style="left:1715px;top:833px;width:44px;height:62px;border-radius:22px;background:#0b4fd6;box-shadow:0 2px 8px rgba(0,40,140,0.25)"></div>
<svg class="a" style="left:1727px;top:844px" width="20" height="18" viewBox="0 0 20 18"><path d="M3.5 10V8a6.5 6.5 0 0 1 13 0v2" fill="none" stroke="#fff" stroke-width="1.6"/><rect x="2.5" y="8.5" width="2.5" height="4.5" rx="1" fill="#fff"/><rect x="15" y="8.5" width="2.5" height="4.5" rx="1" fill="#fff"/><path d="M7 10.5q3 2.5 6 0" fill="none" stroke="#fff" stroke-width="1.5"/><path d="M15.5 13q-1 3-5 3" fill="none" stroke="#fff" stroke-width="1.4"/></svg>
<div class="t" style="left:1725px;top:868px;font-size:12px;color:#fff;font-weight:400;">咨询</div>
<div class="a" style="left:1715px;top:907px;width:44px;height:172px;border-radius:22px;background:#fff;box-shadow:0 2px 10px rgba(0,0,0,0.08)"></div>
<svg class="a" style="left:1727px;top:916px" width="20" height="18" viewBox="0 0 20 18"><path d="M10.6 5.4A4 4 0 0 0 5.9 9.2A2.9 2.9 0 0 0 5.6 15.8H14.6A2.7 2.7 0 0 0 17.4 13" fill="none" stroke="#1a1a1a" stroke-width="1.6" stroke-linecap="round"/><path d="M12 10.2h6.2l-.9-1.1V6.6a2.2 2.2 0 0 0-4.4 0v2.5z" fill="#1a1a1a"/></svg>
<div class="t" style="left:1725px;top:941px;font-size:12px;color:#888;font-weight:400;">动态</div>
<div class="a" style="left:1729px;top:964px;width:17px;height:1px;background:#e3e8f2;"></div>
<svg class="a" style="left:1728px;top:974px" width="18" height="16" viewBox="0 0 18 16"><path d="M1.5 2h5.5a2 2 0 0 1 2 2v10a2 2 0 0 0-2-1.5H1.5z M16.5 2H11a2 2 0 0 0-2 2v10a2 2 0 0 1 2-1.5h5.5z" fill="none" stroke="#1a1a1a" stroke-width="1.5"/><path d="M4 6.5h2.5M11.5 6.5H14" stroke="#1a1a1a" stroke-width="1.3"/></svg>
<div class="t" style="left:1725px;top:996px;font-size:12px;color:#888;font-weight:400;">文档</div>
<div class="a" style="left:1729px;top:1019px;width:17px;height:1px;background:#e3e8f2;"></div>
<svg class="a" style="left:1728px;top:1029px" width="18" height="16" viewBox="0 0 18 16"><path d="M2 2h14v9.5H10l-2 2.5-1.5-2.5H2z" fill="none" stroke="#1a1a1a" stroke-width="1.6" stroke-linejoin="round"/><path d="M5.5 6.5q3.5 2.5 7 0" fill="none" stroke="#1a1a1a" stroke-width="1.3"/></svg>
<div class="a" style="left:1745px;top:1025px;width:6px;height:6px;border-radius:3px;background:#e84545"></div>
<div class="t" style="left:1725px;top:1051px;font-size:12px;color:#888;font-weight:400;">反馈</div>
<div class="a" style="left:1719px;top:1091px;width:36px;height:36px;border-radius:18px;background:#fff;box-shadow:0 2px 8px rgba(0,0,0,0.08)"></div>
<svg class="a" style="left:1731px;top:1103px" width="12" height="12" viewBox="0 0 12 12"><path d="M4 2l4 4-4 4" fill="none" stroke="#1a1a1a" stroke-width="1.5"/></svg>
</div></body></html>
